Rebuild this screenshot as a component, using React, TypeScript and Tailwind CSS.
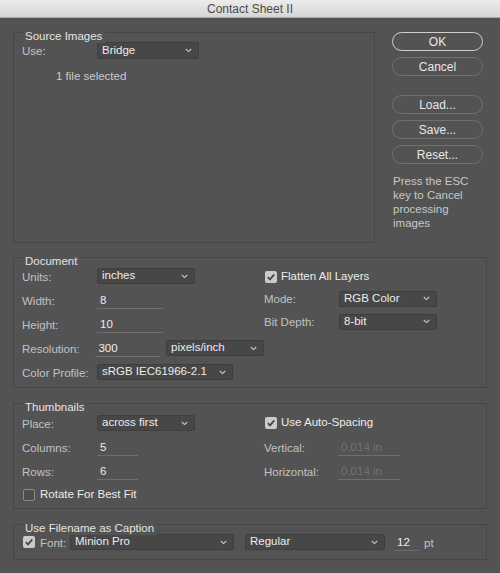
import React from "react";

// Shared bits
const label = "text-[#c2c2c2] pt-[3px]";
const value = "text-[#ececec]";

function Chevron() {
    return (
        <svg width="7" height="5" viewBox="0 0 7 5" className="shrink-0">
            <polyline points="0.8,1 3.5,3.6 6.2,1" fill="none" stroke="#c8c8c8" strokeWidth="1.1" />
        </svg>
    );
}

function Select({ text, w, h = "h-[16px]" }: { text: string; w: string; h?: string }) {
    return (
        <div className={`${w} ${h} flex items-center justify-between pl-[4px] pr-[6px] bg-[#474747] border border-[#3e3e3e] rounded-[2px] ${value}`}>
            <span className="leading-none">{text}</span>
            <Chevron />
        </div>
    );
}

function Field({ text, w, dim = false }: { text: string; w: string; dim?: boolean }) {
    return (
        <div className={`${w} h-[16px] leading-[15px] pl-[3px] mt-[2px] border-b border-[#6e6e6e] ${dim ? "text-[#727272]" : value}`}>
            {text}
        </div>
    );
}

function Check({ on }: { on: boolean }) {
    if (!on) return <div className="w-[12px] h-[12px] shrink-0 rounded-[2px] border border-[#8a8a8a] bg-[#4d4d4d]" />;
    return (
        <div className="w-[12px] h-[12px] shrink-0 rounded-[2px] bg-[#cbcbcb] flex items-center justify-center">
            <svg width="10" height="10" viewBox="0 0 10 10">
                <path d="M1.8 5.2 L4 7.4 L8.3 2.4" fill="none" stroke="#464646" strokeWidth="1.7" />
            </svg>
        </div>
    );
}

function Group({ title, className, children }: { title: string; className: string; children?: React.ReactNode }) {
    return (
        <div className={`relative border border-[#464646] ${className}`}>
            <div className="absolute left-[8px] top-[-4px] px-[3px] leading-[14px] bg-[#535353] text-[#e4e4e4]">{title}</div>
            {children}
        </div>
    );
}

function Btn({ text, primary = false, className = "" }: { text: string; primary?: boolean; className?: string }) {
    return (
        <div
            className={`h-[19px] rounded-full border flex items-center justify-center text-[12px] text-[#e8e8e8] ${
                primary ? "border-[#cfcfcf]" : "border-[#707070]"
            } ${className}`}
        >
            {text}
        </div>
    );
}

export default function App() {
    return (
        <div className="w-[500px] h-[573px] bg-[#535353] text-[11.5px] font-['Liberation_Sans',Arial,sans-serif] overflow-hidden">
            {/* Title bar */}
            <div className="h-[18px] bg-gradient-to-b from-[#ececec] to-[#d5d5d5] border-b border-[#a9a9a9] flex items-center justify-center text-[12px] text-[#4b4b4b]">
                Contact Sheet II
            </div>

            <div className="px-[13px] pt-[14px]">
                {/* Source images + buttons */}
                <div className="flex">
                    <Group title="Source Images" className="w-[362px] h-[211px]">
                        <div className="pt-[9px] pl-[8px]">
                            <div className="flex items-center h-[17px]">
                                <span className={`w-[75px] ${label}`}>Use:</span>
                                <Select text="Bridge" w="w-[102px]" h="h-[17px]" />
                            </div>
                            <div className="mt-[10px] ml-[34px] leading-[14px] text-[#cacaca]">1 file selected</div>
                        </div>
                    </Group>

                    <div className="ml-[17px] w-[91px]">
                        <Btn text="OK" primary />
                        <Btn text="Cancel" className="mt-[6px]" />
                        <Btn text="Load..." className="mt-[19px]" />
                        <Btn text="Save..." className="mt-[6px]" />
                        <Btn text="Reset..." className="mt-[6px]" />
                        <p className="mt-[10px] pl-[1px] leading-[14px] text-[#c8c8c8]">
                            Press the ESC
                            <br />
                            key to Cancel
                            <br />
                            processing
                            <br />
                            images
                        </p>
                    </div>
                </div>

                {/* Document */}
                <Group title="Document" className="mt-[14px] h-[131px]">
                    <div className="flex pt-[6px]">
                        <div className="w-[250px] pl-[8px]">
                            <div className="flex items-center h-[24px]">
                                <span className={`w-[75px] ${label}`}>Units:</span>
                                <Select text="inches" w="w-[98px]" />
                            </div>
                            <div className="flex items-center h-[24px]">
                                <span className={`w-[75px] ${label}`}>Width:</span>
                                <Field text="8" w="w-[66px]" />
                            </div>
                            <div className="flex items-center h-[24px]">
                                <span className={`w-[75px] ${label}`}>Height:</span>
                                <Field text="10" w="w-[66px]" />
                            </div>
                            <div className="flex items-center h-[24px]">
                                <span className={`w-[75px] ${label}`}>Resolution:</span>
                                <Field text="300" w="w-[66px]" />
                                <div className="ml-[6px]">
                                    <Select text="pixels/inch" w="w-[98px]" />
                                </div>
                            </div>
                            <div className="flex items-center h-[24px]">
                                <span className={`w-[75px] ${label}`}>Color Profile:</span>
                                <Select text="sRGB IEC61966-2.1" w="w-[136px]" />
                            </div>
                        </div>
                        <div className="flex-1">
                            <div className="flex items-center h-[23px] pl-[1px] pt-[3px]">
                                <Check on />
                                <span className={`ml-[4px] ${value}`}>Flatten All Layers</span>
                            </div>
                            <div className="flex items-center h-[23px]">
                                <span className={`w-[75px] ${label}`}>Mode:</span>
                                <Select text="RGB Color" w="w-[98px]" />
                            </div>
                            <div className="flex items-center h-[23px]">
                                <span className={`w-[75px] ${label}`}>Bit Depth:</span>
                                <Select text="8-bit" w="w-[98px]" />
                            </div>
                        </div>
                    </div>
                </Group>

                {/* Thumbnails */}
                <Group title="Thumbnails" className="mt-[15px] h-[106px]">
                    <div className="flex pt-[7px]">
                        <div className="w-[250px] pl-[8px]">
                            <div className="flex items-center h-[24px]">
                                <span className={`w-[75px] ${label}`}>Place:</span>
                                <Select text="across first" w="w-[98px]" />
                            </div>
                            <div className="flex items-center h-[24px]">
                                <span className={`w-[75px] ${label}`}>Columns:</span>
                                <Field text="5" w="w-[41px]" />
                            </div>
                            <div className="flex items-center h-[24px]">
                                <span className={`w-[75px] ${label}`}>Rows:</span>
                                <Field text="6" w="w-[41px]" />
                            </div>
                            <div className="flex items-center h-[24px] pl-[1px]">
                                <Check on={false} />
                                <span className={`ml-[5px] ${value}`}>Rotate For Best Fit</span>
                            </div>
                        </div>
                        <div className="flex-1">
                            <div className="flex items-center h-[24px] pl-[1px]">
                                <Check on />
                                <span className={`ml-[4px] ${value}`}>Use Auto-Spacing</span>
                            </div>
                            <div className="flex items-center h-[24px]">
                                <span className={`w-[74px] ${label}`}>Vertical:</span>
                                <Field text="0.014 in" w="w-[62px]" dim />
                            </div>
                            <div className="flex items-center h-[24px]">
                                <span className={`w-[74px] ${label}`}>Horizontal:</span>
                                <Field text="0.014 in" w="w-[62px]" dim />
                            </div>
                        </div>
                    </div>
                </Group>

                {/* Caption */}
                <Group title="Use Filename as Caption" className="mt-[15px] h-[36px]">
                    <div className="flex items-center h-[24px] mt-[5px] pl-[9px]">
                        <Check on />
                        <span className={`ml-[5px] w-[25px] ${label}`}>Font:</span>
                        <div className="ml-[5px]">
                            <Select text="Minion Pro" w="w-[164px]" />
                        </div>
                        <div className="ml-[11px]">
                            <Select text="Regular" w="w-[140px]" />
                        </div>
                        <div className="ml-[9px]">
                            <Field text="12" w="w-[25px]" />
                        </div>
                        <span className={`ml-[5px] ${label}`}>pt</span>
                    </div>
                </Group>
            </div>
        </div>
    );
}
